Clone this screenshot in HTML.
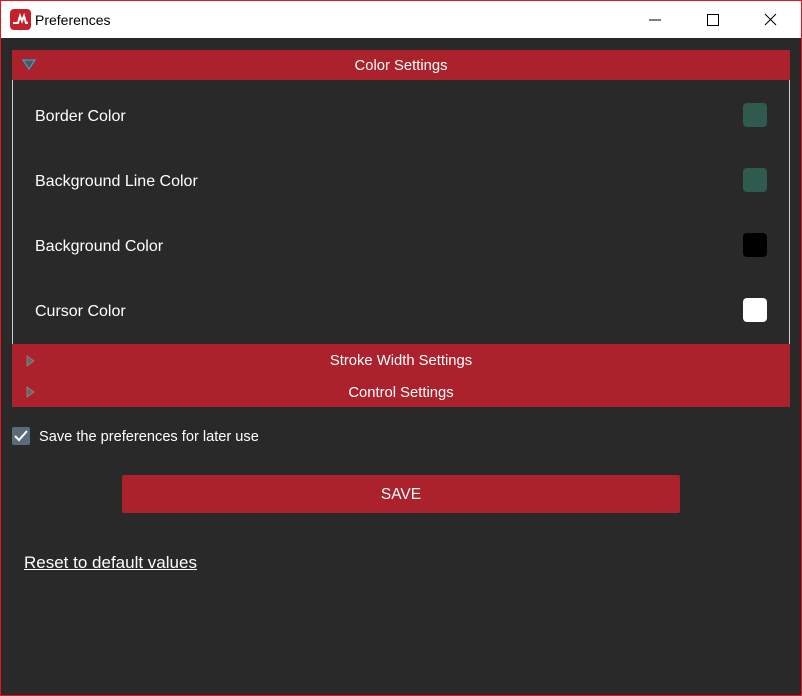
<!DOCTYPE html>
<html><head><meta charset="utf-8"><style>
*{margin:0;padding:0;box-sizing:border-box}
body{width:802px;height:696px;overflow:hidden;font-family:"Liberation Sans",sans-serif;background:#292929;position:relative}
.win{position:absolute;left:0;top:0;width:802px;height:696px;border:1px solid #e81123;border-top:none}
.title{position:absolute;left:0;top:0;width:802px;height:38px;background:#fff;border:1px solid #e81123;border-bottom:none}
.title .t{position:absolute;left:34px;top:11px;font-size:14px;color:#000}
.hdr{position:absolute;left:12px;width:778px;background:#ab222c;color:#fff;font-size:14.8px;text-align:center}
.panel{position:absolute;left:12px;top:80px;width:778px;height:264px;border-left:1px solid #ccc;border-right:1px solid #ccc}
.row{position:absolute;left:35px;color:#fff;font-size:16px}
.sw{position:absolute;left:743px;width:24px;height:24px;border-radius:4px}
.btn{position:absolute;left:122px;top:475px;width:558px;height:38px;background:#ab222c;color:#fff;font-size:15.5px;text-align:center;line-height:40px;border-radius:2px}
</style></head><body>
<div class="win"></div>
<div class="title">
<svg style="position:absolute;left:9px;top:8px" width="21" height="21" viewBox="0 0 21 21"><rect width="21" height="21" rx="4" fill="#c8202a"/><path d="M3 14h5l2-7 2 5 2-5 2 7h2" stroke="#fff" stroke-width="2" fill="none"/></svg>
<span class="t">Preferences</span>
<svg style="position:absolute;left:640px;top:10px" width="150" height="18"><line x1="8" y1="9" x2="20" y2="9" stroke="#000"/><rect x="66.5" y="3.5" width="11" height="11" fill="none" stroke="#000"/><path d="M124 3l11 11M135 3l-11 11" stroke="#000"/></svg>
</div>
<div class="hdr" style="top:50px;height:30px;line-height:33px">Color Settings
<svg style="position:absolute;left:10px;top:9px" width="14" height="12"><path d="M1 1h12L7 10z" fill="#555" stroke="#29a4d6" stroke-width="1.2"/></svg></div>
<div class="panel"></div>
<div class="row" style="top:108px">Border Color</div><div class="sw" style="top:103px;background:#2f5a4e"></div>
<div class="row" style="top:173px">Background Line Color</div><div class="sw" style="top:168px;background:#2f5a4e"></div>
<div class="row" style="top:238px">Background Color</div><div class="sw" style="top:233px;background:#000"></div>
<div class="row" style="top:303px">Cursor Color</div><div class="sw" style="top:298px;background:#fff"></div>
<div class="hdr" style="top:344px;height:32px;line-height:35px">Stroke Width Settings
<svg style="position:absolute;left:14px;top:11px" width="10" height="12"><path d="M1 1l7 5-7 5z" fill="#666" stroke="#999" stroke-width=".6"/></svg></div>
<div class="hdr" style="top:376px;height:31px;line-height:34px">Control Settings
<svg style="position:absolute;left:14px;top:10px" width="10" height="12"><path d="M1 1l7 5-7 5z" fill="#666" stroke="#999" stroke-width=".6"/></svg></div>
<div style="position:absolute;left:12px;top:427px;width:18px;height:18px;background:#5b6b78;border-radius:2px"><svg width="18" height="18"><path d="M3 9l4 4 8-9" stroke="#fff" stroke-width="2" fill="none"/></svg></div>
<div style="position:absolute;left:39px;top:429px;color:#fff;font-size:14.6px">Save the preferences for later use</div>
<div class="btn">SAVE</div>
<div style="position:absolute;left:24px;top:553px;color:#fff;font-size:17px;text-decoration:underline">Reset to default values</div>
</body></html>
